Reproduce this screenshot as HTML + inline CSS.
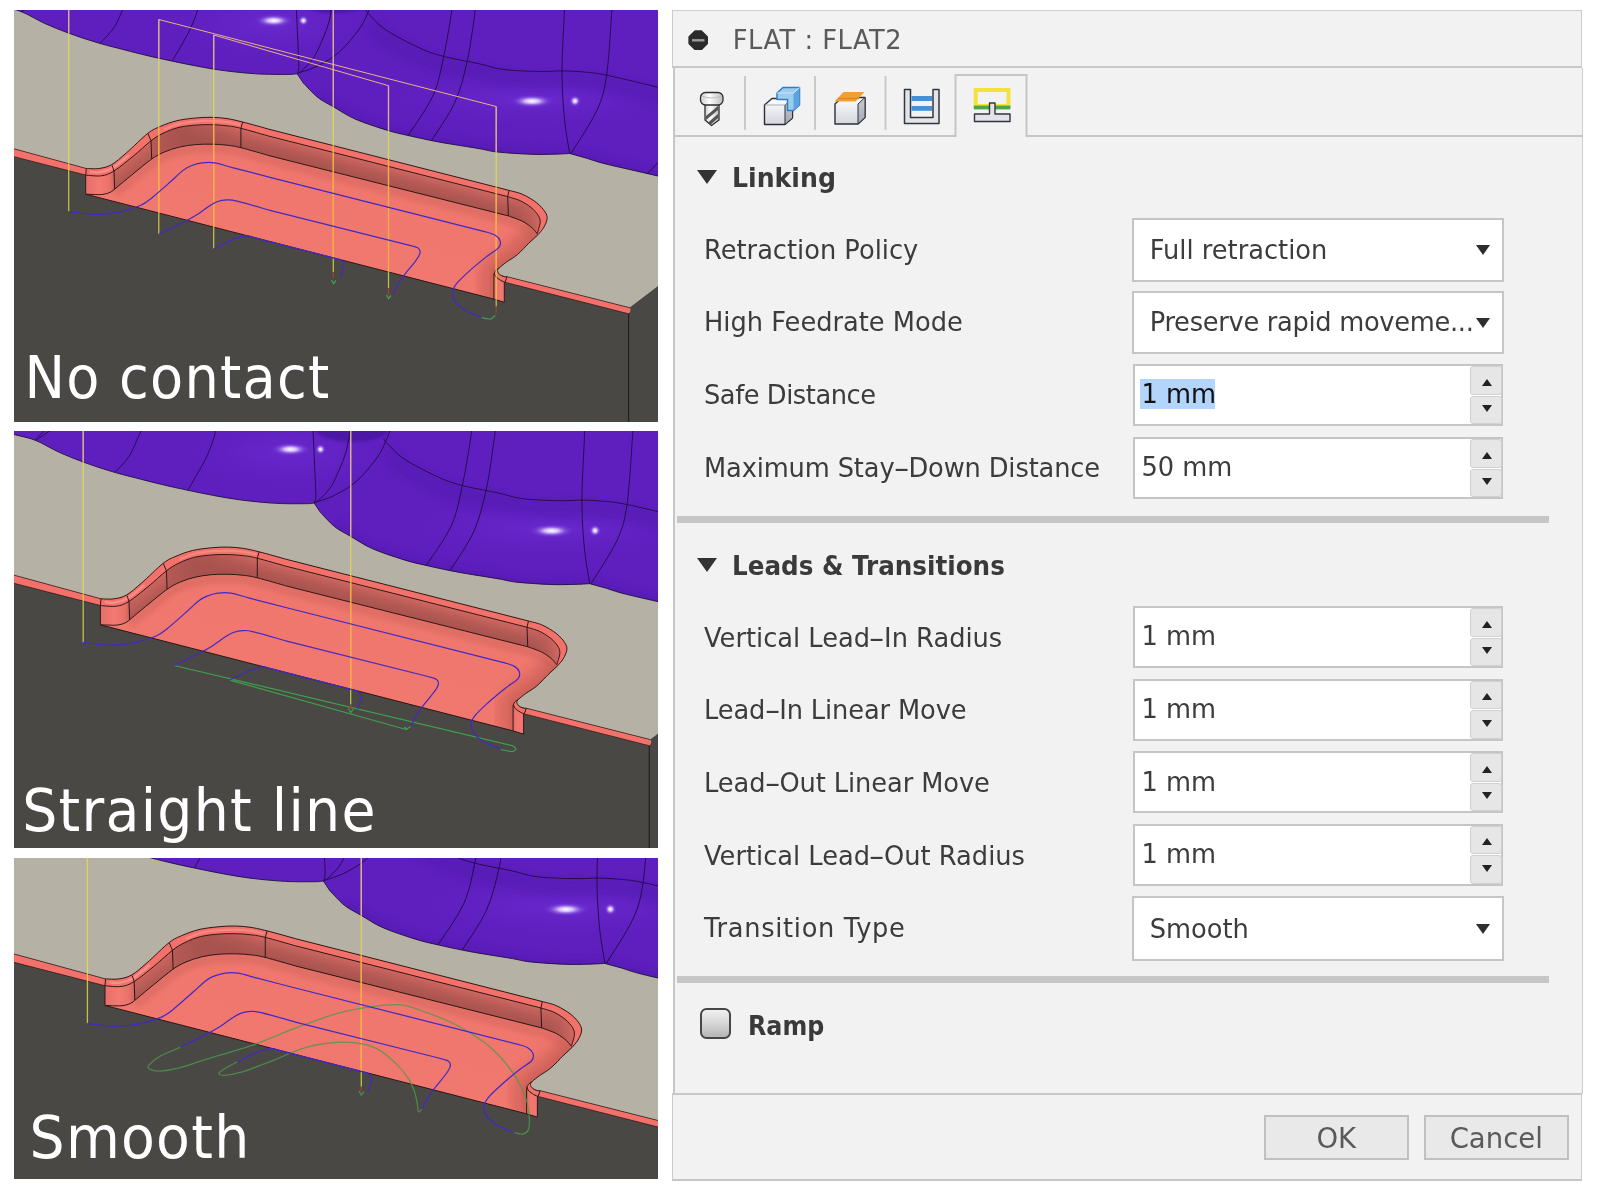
<!DOCTYPE html>
<html><head><meta charset="utf-8"><title>Linking</title>
<style>
html,body{margin:0;padding:0;background:#fff}
body{width:1600px;height:1194px;position:relative;overflow:hidden;font-family:"DejaVu Sans","Liberation Sans",sans-serif;color:#3a3a3a}
.shot{position:absolute;display:block;overflow:hidden}

.dlg{position:absolute;left:0;top:0;will-change:transform}
.abs{position:absolute}
.hy{display:inline-block;transform:scaleX(1.75);margin:0 2.4px}
.lbl{position:absolute;left:704px;height:40px;line-height:40px;font-size:25.7px;white-space:nowrap;color:#3c3c3c}
.hdr{position:absolute;left:732px;transform-origin:0 50%;height:40px;line-height:40px;font-size:25.7px;font-weight:bold;white-space:nowrap;color:#3a3a3a}
.sel{position:absolute;left:1132px;width:372px;height:63.5px;background:#fff;border:2px solid #c5c5c5;box-sizing:border-box}
.sel span{position:absolute;left:15.7px;top:9.8px;height:40px;line-height:40px;font-size:25.7px;white-space:nowrap;color:#3c3c3c}
.sel i{position:absolute;right:12px;top:25px;width:0;height:0;border-left:7px solid transparent;border-right:7px solid transparent;border-top:10px solid #2e2e2e}
.spin{position:absolute;left:1133px;width:370px;height:62px;background:#fff;border:2px solid #c5c5c5;box-sizing:border-box}
.spin span{position:absolute;left:6.5px;top:8.3px;height:40px;line-height:40px;font-size:25.7px;white-space:nowrap;color:#3c3c3c}
.spin b{position:absolute;right:-1px;width:32px;background:#e6e6e6;border:1px solid #d0d0d0;border-radius:3px;box-sizing:border-box}
.spin b.u{top:0;height:28.5px}
.spin b.d{bottom:0;height:28.5px}
.spin b.u:after{content:"";position:absolute;left:10.5px;top:11.5px;border-left:5px solid transparent;border-right:5px solid transparent;border-bottom:7px solid #222}
.spin b.d:after{content:"";position:absolute;left:10.5px;top:8.5px;border-left:5px solid transparent;border-right:5px solid transparent;border-top:7px solid #222}
.bar{position:absolute;left:677px;width:872px;height:7px;background:#c6c6c6}
.tri{position:absolute;width:0;height:0;border-left:10.7px solid transparent;border-right:10.7px solid transparent;border-top:14.5px solid #333}
.btn{position:absolute;top:1114.6px;height:45px;width:144.5px;box-sizing:border-box;border:2px solid #c0c0c0;background:#e9e9e9;font-size:27.5px;line-height:43px;text-align:center;color:#5a5a5a}

</style></head><body>
<svg width="0" height="0" style="position:absolute"><defs>
<clipPath id="cpPurple"><path d="M-40 -12 C-35.6 -10.7 -21.5 -6.4 -13.6 -4.1 C-5.7 -1.8 -0.2 -1.3 7.2 1.6 C14.6 4.5 23.1 10 31 13.6 C38.9 17.2 46.4 20.1 54.8 23.2 C63.2 26.3 73.2 29.6 81.2 32 C89.2 34.5 92.1 35.2 102.8 37.9 C113.5 40.6 129.5 44.9 145.5 48.4 C161.5 51.9 183 56.4 199 59 C215 61.6 229.2 62.9 241.6 63.8 C254 64.7 266.8 64.4 273.7 64.4 C280.6 64.4 281.6 63.9 283.2 63.8 L289.4 73.1 C291.8 75.4 298.6 83.3 303.5 87.2 C308.4 91.1 312.9 93 319.1 96.6 C325.4 100.2 332.1 105.1 341 109 C349.9 112.9 363.4 117.2 372.2 120 C381.1 122.8 386.3 123.7 394.1 125.5 C401.9 127.3 411.5 129.4 419.1 130.9 C426.8 132.4 432.2 133.3 440 134.6 C447.8 135.9 458.8 137.5 466 138.8 C473.2 140 474.9 141.1 483.3 142 C491.7 142.9 507.1 143.9 516.5 144.3 C526 144.7 533.5 144.3 540 144.2 C546.5 144.1 553.1 143.6 555.7 143.5 L572 148 C575.3 149 579.9 151 591.9 154 C603.9 157 622.5 161 643.9 166 C665.2 171 707.3 181 720 184 L720 -40 L-40 -40Z"/></clipPath>
<clipPath id="cpPocket"><path d="M72.3 158.5 C74.4 158.5 80.7 159.1 84.9 158.5 C89.1 157.9 92.9 157.3 97.5 154.7 C102.1 152.1 106.4 148 112.5 142.8 C118.6 137.6 128.2 127.7 133.9 123.3 C139.6 118.9 141.7 118.5 146.5 116.4 C151.3 114.3 157 112.1 162.8 110.7 C168.7 109.3 175.7 108.6 181.6 108 C187.5 107.4 192.8 107.2 198 107.3 C203.2 107.4 207.9 107.8 213 108.6 C218.1 109.4 221.5 110.2 228.7 112 C235.9 113.8 251.4 118.2 256 119.5 L495.1 180.4 C497.4 181.1 504.3 182.4 508.9 184.5 C513.5 186.6 519 189.9 522.7 192.8 C526.4 195.7 529.3 199.2 531 201.8 C532.7 204.5 533.3 206 533.1 208.7 C532.9 211.3 531.1 215 529.6 217.7 C528.1 220.3 525 223.4 524.1 224.6 L514.4 233.6 C512.6 235.4 507.1 241.5 503.4 244.6 C499.7 247.7 495.3 250 492.3 252.2 C489.3 254.4 487.2 256.4 485.4 257.8 C483.6 259.2 482.4 259.5 481.5 260.6 C480.6 261.7 480.2 263.9 479.9 264.5 L479.9 289.1 L71.7 184.2Z"/></clipPath>
<filter id="blur2" x="-10%" y="-30%" width="120%" height="160%"><feGaussianBlur stdDeviation="2.2"/></filter>
<filter id="blur5" x="-40%" y="-40%" width="180%" height="180%"><feGaussianBlur stdDeviation="5"/></filter>
<linearGradient id="gEndFace" gradientUnits="userSpaceOnUse" x1="480" y1="0" x2="490.5" y2="0"><stop offset="0" stop-color="#e26d66"/><stop offset=".35" stop-color="#f2766f"/><stop offset="1" stop-color="#f2766f"/></linearGradient>
<filter id="blur1" x="-10%" y="-30%" width="120%" height="160%"><feGaussianBlur stdDeviation="1.2"/></filter>
<filter id="blur4" x="-10%" y="-50%" width="120%" height="200%"><feGaussianBlur stdDeviation="4"/></filter>
<linearGradient id="gFloor" gradientUnits="userSpaceOnUse" x1="100" y1="120" x2="60" y2="280"><stop offset="0" stop-color="#f0776d"/><stop offset="1" stop-color="#f2796f"/></linearGradient>
<linearGradient id="gWall" gradientUnits="userSpaceOnUse" x1="0" y1="0" x2="-5.1" y2="20" gradientTransform="translate(300 137)"><stop offset="0" stop-color="#cf6761"/><stop offset=".5" stop-color="#b45954"/><stop offset="1" stop-color="#a6524e"/></linearGradient>
<linearGradient id="gSegA" gradientUnits="userSpaceOnUse" x1="72" y1="0" x2="101" y2="0"><stop offset="0" stop-color="#e56f69"/><stop offset=".45" stop-color="#f47a73"/><stop offset=".8" stop-color="#e9726b"/><stop offset="1" stop-color="#c9625c"/></linearGradient>
<linearGradient id="gSegB" gradientUnits="userSpaceOnUse" x1="110" y1="150" x2="122" y2="166"><stop offset="0" stop-color="#cf6660"/><stop offset="1" stop-color="#a9544f"/></linearGradient>
<linearGradient id="gSegC" gradientUnits="userSpaceOnUse" x1="137" y1="0" x2="227" y2="0"><stop offset="0" stop-color="#b85b56" stop-opacity=".9"/><stop offset=".35" stop-color="#a9534f" stop-opacity=".5"/><stop offset="1" stop-color="#a9534f" stop-opacity="0"/></linearGradient>
<linearGradient id="gSegE" gradientUnits="userSpaceOnUse" x1="494" y1="0" x2="526" y2="0"><stop offset="0" stop-color="#a9534f" stop-opacity="0"/><stop offset="1" stop-color="#d66a63" stop-opacity=".9"/></linearGradient>
<linearGradient id="gEndWall" gradientUnits="userSpaceOnUse" x1="440" y1="0" x2="482" y2="0"><stop offset="0" stop-color="#f07a72" stop-opacity="0"/><stop offset=".75" stop-color="#d96c65" stop-opacity=".75"/><stop offset="1" stop-color="#c9625c" stop-opacity=".9"/></linearGradient>
<radialGradient id="gHL"><stop offset="0" stop-color="#fff" stop-opacity="1"/><stop offset=".3" stop-color="#e8d8ff" stop-opacity=".85"/><stop offset=".65" stop-color="#9a6cf0" stop-opacity=".35"/><stop offset="1" stop-color="#6a2ad0" stop-opacity="0"/></radialGradient>
<radialGradient id="gPL"><stop offset="0" stop-color="#7030d8" stop-opacity=".55"/><stop offset="1" stop-color="#6524c8" stop-opacity="0"/></radialGradient>
<radialGradient id="gPD"><stop offset="0" stop-color="#3c0e8c" stop-opacity=".7"/><stop offset="1" stop-color="#4a12a4" stop-opacity="0"/></radialGradient>

<g id="model">
<rect x="-40" y="-40" width="760" height="520" fill="#4a4845"/>
<path d="M-40 127.9 L72.3 158.5 L493 266.7 L616 297.8 L646 275 L720 218.7 L720 -40 L-40 -40Z" fill="#b5b1a4"/>
<path d="M614.6 299.2V480" stroke="#1f1d1b" stroke-width="1.05" fill="none"/>
<path d="M616 297.8L646 275L720 218.7" stroke="#3a3936" stroke-width="0.7" fill="none"/>
<path d="M-40 127.9L72.3 158.5L71.7 165.1L-40 136.4Z" fill="#f2726b"/>
<path d="M-40 127.9L72.3 158.5M-40 136.4L71.7 165.1" stroke="#2b1414" stroke-width="0.7" fill="none"/>
<path d="M493 266.7L616 297.8Q617.5 301 614.6 303.8L491 272.3Z" fill="#f2726b"/>
<path d="M493 266.7L616 297.8M491 272.3L614.6 303.8" stroke="#2b1414" stroke-width="0.7" fill="none"/>
<path d="M72.3 158.5 C74.4 158.5 80.7 159.1 84.9 158.5 C89.1 157.9 92.9 157.3 97.5 154.7 C102.1 152.1 106.4 148 112.5 142.8 C118.6 137.6 128.2 127.7 133.9 123.3 C139.6 118.9 141.7 118.5 146.5 116.4 C151.3 114.3 157 112.1 162.8 110.7 C168.7 109.3 175.7 108.6 181.6 108 C187.5 107.4 192.8 107.2 198 107.3 C203.2 107.4 207.9 107.8 213 108.6 C218.1 109.4 221.5 110.2 228.7 112 C235.9 113.8 251.4 118.2 256 119.5 L495.1 180.4 C497.4 181.1 504.3 182.4 508.9 184.5 C513.5 186.6 519 189.9 522.7 192.8 C526.4 195.7 529.3 199.2 531 201.8 C532.7 204.5 533.3 206 533.1 208.7 C532.9 211.3 531.1 215 529.6 217.7 C528.1 220.3 525 223.4 524.1 224.6 L514.4 233.6 C512.6 235.4 507.1 241.5 503.4 244.6 C499.7 247.7 495.3 250 492.3 252.2 C489.3 254.4 487.2 256.4 485.4 257.8 C483.6 259.2 482.4 259.5 481.5 260.6 C480.6 261.7 480.2 263.9 479.9 264.5 L479.9 289.1 L71.7 184.2Z" fill="url(#gFloor)"/>
<g clip-path="url(#cpPocket)">
<path d="M526 222 C524.1 223.9 518.2 229.8 514.4 233.6 C510.6 237.4 507.1 241.5 503.4 244.6 C499.7 247.7 495.3 250 492.3 252.2 C489.3 254.4 487.2 256.4 485.4 257.8 C483.6 259.2 482.4 259.5 481.5 260.6 C480.6 261.7 480.2 263.9 479.9 264.5 L479.9 292" stroke="#b9544e" stroke-width="30" fill="none" opacity=".42" filter="url(#blur5)"/>
<path d="M526 222 C524.1 223.9 518.2 229.8 514.4 233.6 C510.6 237.4 507.1 241.5 503.4 244.6 C499.7 247.7 495.3 250 492.3 252.2 C489.3 254.4 487.2 256.4 485.4 257.8 C483.6 259.2 482.4 259.5 481.5 260.6 C480.6 261.7 480.2 263.9 479.9 264.5 L479.9 292" stroke="#b9544e" stroke-width="9" fill="none" opacity=".3" filter="url(#blur2)"/>
<path d="M100.6 179.2 C103.6 176.7 112.6 169.1 118.8 164.1 C125 159.1 132.5 152.7 137.7 149 C142.9 145.3 145.6 144.1 150.2 142.1 C154.8 140.1 160.1 138.3 165.3 137.1 C170.5 135.8 176.2 135.1 181.6 134.6 C187 134.1 192.8 134.1 198 134.2 C203.2 134.3 208.2 134.6 213 135.2 C217.8 135.8 219.7 135.9 226.9 137.7 C234.1 139.5 251.2 144.5 256 145.9 L494.4 205.9 C496.8 206.8 504.9 209.4 508.9 211.5 C512.9 213.6 516.2 216.3 518.6 218.4 C521 220.5 522.6 223 523.4 223.9" stroke="#c45f59" stroke-width="12" fill="none" opacity=".35" filter="url(#blur2)" transform="translate(0,3)"/>
</g>
<path d="M485.4 257.8 C485.1 258.3 483.6 259.7 483.6 260.8 C483.6 261.9 484.4 263.2 485.4 264.2 C486.4 265.1 488.3 266.1 489.6 266.5 C490.9 266.9 492.4 266.7 493 266.7 L491 272.3 L491 272.3 C490.3 272 488.3 271.3 486.8 270.4 C485.3 269.5 483.1 268.1 482 266.9 C480.9 265.7 480.5 263.6 480.2 263 L479.9 264.5 L481.5 260.6Z" fill="#f2726b"/>
<path d="M480.2 263 C480.5 263.6 480.9 265.7 482 266.9 C483.1 268.1 485.3 269.5 486.8 270.4 C488.3 271.3 490.3 272 491 272.3 L490.3 272.3 L490.3 292.3 L479.9 289.1 L479.9 263Z" fill="url(#gEndFace)"/>
<path d="M71.7 165.1 C74.3 165.2 82.7 166.5 87.4 165.8 C92.1 165.1 94.8 164.2 100 161 C105.2 157.8 112.6 151.5 118.8 146.5 C125 141.5 132 134.7 137 130.8 C142 126.9 144.5 125.5 149 123.3 C153.5 121.1 158.6 119 164 117.6 C169.4 116.2 175.9 115.6 181.6 115.1 C187.3 114.6 192.8 114.6 198 114.7 C203.2 114.8 208.2 115.2 213 115.8 C217.8 116.4 219.7 116.5 226.9 118.3 C234.1 120.1 251.2 125.1 256 126.4 L493.7 186.6 C495.8 187.3 502.3 188.9 506.2 190.7 C510.1 192.5 514.2 195.2 517.2 197.6 C520.2 200 522.6 202.9 524.1 205.2 C525.6 207.5 526.1 209.3 526.2 211.5 C526.3 213.7 525.3 216.5 524.8 218.4 C524.3 220.3 523.6 222.4 523.4 223.2 L523.4 223.9 C522.6 223 521 220.5 518.6 218.4 C516.2 216.3 512.9 213.6 508.9 211.5 C504.9 209.4 496.8 206.8 494.4 205.9 L256 145.9 C251.2 144.5 234.1 139.5 226.9 137.7 C219.7 135.9 217.8 135.8 213 135.2 C208.2 134.6 203.2 134.3 198 134.2 C192.8 134.1 187 134.1 181.6 134.6 C176.2 135.1 170.5 135.8 165.3 137.1 C160.1 138.3 154.8 140.1 150.2 142.1 C145.6 144.1 142.9 145.3 137.7 149 C132.5 152.7 125 159.1 118.8 164.1 C112.6 169.1 104.4 176.2 100.6 179.2 C96.8 182.2 98.4 181.4 96.2 182.3 C94 183.2 91.5 184.2 87.4 184.5 C83.3 184.8 74.3 184.2 71.7 184.2Z" fill="url(#gWall)"/>
<path d="M71.7 165.1 C74.3 165.2 82.7 166.5 87.4 165.8 C92.1 165.1 97.9 161.8 100 161 L100.6 179.2 C99.9 179.7 98.4 181.4 96.2 182.3 C94 183.2 91.5 184.2 87.4 184.5 C83.3 184.8 74.3 184.2 71.7 184.2Z" fill="url(#gSegA)"/>
<path d="M100 161 C103.1 158.6 112.6 151.5 118.8 146.5 C125 141.5 134 133.4 137 130.8 L137.7 149 C134.5 151.5 125 159.1 118.8 164.1 C112.6 169.1 103.6 176.7 100.6 179.2Z" fill="url(#gSegB)"/>
<path d="M137 130.8 C139 129.6 144.5 125.5 149 123.3 C153.5 121.1 158.6 119 164 117.6 C169.4 116.2 175.9 115.6 181.6 115.1 C187.3 114.6 192.8 114.6 198 114.7 C203.2 114.8 208.2 115.2 213 115.8 C217.8 116.4 224.6 117.9 226.9 118.3 L226.9 137.7 C224.6 137.3 217.8 135.8 213 135.2 C208.2 134.6 203.2 134.3 198 134.2 C192.8 134.1 187 134.1 181.6 134.6 C176.2 135.1 170.5 135.8 165.3 137.1 C160.1 138.3 154.8 140.1 150.2 142.1 C145.6 144.1 139.8 147.8 137.7 149Z" fill="url(#gSegC)"/>
<path d="M493.7 186.6 C495.8 187.3 502.3 188.9 506.2 190.7 C510.1 192.5 514.2 195.2 517.2 197.6 C520.2 200 522.6 202.9 524.1 205.2 C525.6 207.5 526.1 209.3 526.2 211.5 C526.3 213.7 525.3 216.5 524.8 218.4 C524.3 220.3 523.6 222.4 523.4 223.2 L523.4 223.9 C522.6 223 521 220.5 518.6 218.4 C516.2 216.3 512.9 213.6 508.9 211.5 C504.9 209.4 496.8 206.8 494.4 205.9Z" fill="url(#gSegE)"/>
<path d="M72.3 158.5 C74.4 158.5 80.7 159.1 84.9 158.5 C89.1 157.9 92.9 157.3 97.5 154.7 C102.1 152.1 106.4 148 112.5 142.8 C118.6 137.6 128.2 127.7 133.9 123.3 C139.6 118.9 141.7 118.5 146.5 116.4 C151.3 114.3 157 112.1 162.8 110.7 C168.7 109.3 175.7 108.6 181.6 108 C187.5 107.4 192.8 107.2 198 107.3 C203.2 107.4 207.9 107.8 213 108.6 C218.1 109.4 221.5 110.2 228.7 112 C235.9 113.8 251.4 118.2 256 119.5 L495.1 180.4 C497.4 181.1 504.3 182.4 508.9 184.5 C513.5 186.6 519 189.9 522.7 192.8 C526.4 195.7 529.3 199.2 531 201.8 C532.7 204.5 533.3 206 533.1 208.7 C532.9 211.3 531.1 215 529.6 217.7 C528.1 220.3 525 223.4 524.1 224.6 L523.4 223.2 C523.6 222.4 524.3 220.3 524.8 218.4 C525.3 216.5 526.3 213.7 526.2 211.5 C526.1 209.3 525.6 207.5 524.1 205.2 C522.6 202.9 520.2 200 517.2 197.6 C514.2 195.2 510.1 192.5 506.2 190.7 C502.3 188.9 495.8 187.3 493.7 186.6 L256 126.4 C251.2 125.1 234.1 120.1 226.9 118.3 C219.7 116.5 217.8 116.4 213 115.8 C208.2 115.2 203.2 114.8 198 114.7 C192.8 114.6 187.3 114.6 181.6 115.1 C175.9 115.6 169.4 116.2 164 117.6 C158.6 119 153.5 121.1 149 123.3 C144.5 125.5 142 126.9 137 130.8 C132 134.7 125 141.5 118.8 146.5 C112.6 151.5 105.2 157.8 100 161 C94.8 164.2 92.1 165.1 87.4 165.8 C82.7 166.5 74.3 165.2 71.7 165.1Z" fill="#f2726b"/>
<path d="M76 161.8 C77.7 161.9 82.2 162.8 86 162.2 C89.8 161.6 93.7 160.9 98.5 158 C103.3 155.1 112.2 147.2 115 145" stroke="#ffa79f" stroke-width="2.2" fill="none" opacity=".55"/>
<path d="M150 119.6 C152.3 118.7 158.7 115.4 164 114 C169.3 112.6 175.9 111.9 181.6 111.4 C187.3 110.9 192.8 110.8 198 110.9 C203.2 111 208.3 111.4 213 112 C217.7 112.6 223.8 114.2 226 114.6" stroke="#ffa79f" stroke-width="2" fill="none" opacity=".45"/>
<path d="M72.3 158.5 C74.4 158.5 80.7 159.1 84.9 158.5 C89.1 157.9 92.9 157.3 97.5 154.7 C102.1 152.1 106.4 148 112.5 142.8 C118.6 137.6 128.2 127.7 133.9 123.3 C139.6 118.9 141.7 118.5 146.5 116.4 C151.3 114.3 157 112.1 162.8 110.7 C168.7 109.3 175.7 108.6 181.6 108 C187.5 107.4 192.8 107.2 198 107.3 C203.2 107.4 207.9 107.8 213 108.6 C218.1 109.4 221.5 110.2 228.7 112 C235.9 113.8 251.4 118.2 256 119.5 L495.1 180.4 C497.4 181.1 504.3 182.4 508.9 184.5 C513.5 186.6 519 189.9 522.7 192.8 C526.4 195.7 529.3 199.2 531 201.8 C532.7 204.5 533.3 206 533.1 208.7 C532.9 211.3 531.1 215 529.6 217.7 C528.1 220.3 525 223.4 524.1 224.6 L514.4 233.6 C512.6 235.4 507.1 241.5 503.4 244.6 C499.7 247.7 495.3 250 492.3 252.2 C489.3 254.4 486.8 256.4 485.4 257.8 C483.9 259.2 483.6 259.7 483.6 260.8 C483.6 261.9 484.4 263.2 485.4 264.2 C486.4 265.1 488.3 266.1 489.6 266.5 C490.9 266.9 492.4 266.7 493 266.7 M71.7 165.1 C74.3 165.2 82.7 166.5 87.4 165.8 C92.1 165.1 94.8 164.2 100 161 C105.2 157.8 112.6 151.5 118.8 146.5 C125 141.5 132 134.7 137 130.8 C142 126.9 144.5 125.5 149 123.3 C153.5 121.1 158.6 119 164 117.6 C169.4 116.2 175.9 115.6 181.6 115.1 C187.3 114.6 192.8 114.6 198 114.7 C203.2 114.8 208.2 115.2 213 115.8 C217.8 116.4 219.7 116.5 226.9 118.3 C234.1 120.1 251.2 125.1 256 126.4 L493.7 186.6 C495.8 187.3 502.3 188.9 506.2 190.7 C510.1 192.5 514.2 195.2 517.2 197.6 C520.2 200 522.6 202.9 524.1 205.2 C525.6 207.5 526.1 209.3 526.2 211.5 C526.3 213.7 525.3 216.5 524.8 218.4 C524.3 220.3 523.6 222.4 523.4 223.2 M100.6 179.2 C103.6 176.7 112.6 169.1 118.8 164.1 C125 159.1 132.5 152.7 137.7 149 C142.9 145.3 145.6 144.1 150.2 142.1 C154.8 140.1 160.1 138.3 165.3 137.1 C170.5 135.8 176.2 135.1 181.6 134.6 C187 134.1 192.8 134.1 198 134.2 C203.2 134.3 208.2 134.6 213 135.2 C217.8 135.8 219.7 135.9 226.9 137.7 C234.1 139.5 251.2 144.5 256 145.9 L494.4 205.9 C496.8 206.8 504.9 209.4 508.9 211.5 C512.9 213.6 516.2 216.3 518.6 218.4 C521 220.5 522.6 223 523.4 223.9 M71.7 184.2 C74.3 184.2 83.3 184.8 87.4 184.5 C91.5 184.2 94 183.2 96.2 182.3 C98.4 181.4 99.9 179.7 100.6 179.2 M72.3 158.5L71.7 165.1L71.7 184.2L479.9 289.1 M98.1 155.3L100 161L100.6 179.2 M133.9 123.3L137 130.8L137.7 149 M228.7 112L226.9 118.3L226.9 137.7 M495.1 180.4L493.7 186.6L494.4 205.9 M485.4 257.8 C484.8 258.3 482.4 259.5 481.5 260.6 C480.6 261.7 480.2 263.9 479.9 264.5 L479.9 289.1L490.3 292.3L490.3 272.3 M480.2 263 C480.5 263.6 480.9 265.7 482 266.9 C483.1 268.1 485.3 269.5 486.8 270.4 C488.3 271.3 490.3 272 491 272.3 M493 266.7L491 272.3" stroke="#2b1414" stroke-width="0.95" fill="none" stroke-linejoin="round"/>
<path d="M-40 -12 C-35.6 -10.7 -21.5 -6.4 -13.6 -4.1 C-5.7 -1.8 -0.2 -1.3 7.2 1.6 C14.6 4.5 23.1 10 31 13.6 C38.9 17.2 46.4 20.1 54.8 23.2 C63.2 26.3 73.2 29.6 81.2 32 C89.2 34.5 92.1 35.2 102.8 37.9 C113.5 40.6 129.5 44.9 145.5 48.4 C161.5 51.9 183 56.4 199 59 C215 61.6 229.2 62.9 241.6 63.8 C254 64.7 266.8 64.4 273.7 64.4 C280.6 64.4 281.6 63.9 283.2 63.8 L289.4 73.1 C291.8 75.4 298.6 83.3 303.5 87.2 C308.4 91.1 312.9 93 319.1 96.6 C325.4 100.2 332.1 105.1 341 109 C349.9 112.9 363.4 117.2 372.2 120 C381.1 122.8 386.3 123.7 394.1 125.5 C401.9 127.3 411.5 129.4 419.1 130.9 C426.8 132.4 432.2 133.3 440 134.6 C447.8 135.9 458.8 137.5 466 138.8 C473.2 140 474.9 141.1 483.3 142 C491.7 142.9 507.1 143.9 516.5 144.3 C526 144.7 533.5 144.3 540 144.2 C546.5 144.1 553.1 143.6 555.7 143.5 L572 148 C575.3 149 579.9 151 591.9 154 C603.9 157 622.5 161 643.9 166 C665.2 171 707.3 181 720 184 L720 -40 L-40 -40Z" fill="#5f1fbf"/>
<g clip-path="url(#cpPurple)">
<ellipse cx="520" cy="88" rx="150" ry="30" fill="url(#gPL)"/>
<ellipse cx="260" cy="14" rx="110" ry="36" fill="url(#gPL)"/>
<ellipse cx="320.6" cy="-10.5" rx="36.6" ry="13.6" fill="#4815a0" opacity=".85" filter="url(#blur1)"/>
<path d="M355 4.4 C357.8 7 363.9 14.6 372 20 C380.1 25.4 394.2 32.7 403.5 37 C412.8 41.3 417.6 43.2 428 46 C438.4 48.8 456.3 51.8 466 54 C475.7 56.2 479 57.8 486.3 59 C493.6 60.2 502.4 60.6 510 61 C517.5 61.4 525 61.4 531.6 61.4 C538.2 61.4 543.2 60.8 549.6 60.9 C556 61 563 61.3 570 62 C577 62.7 579.6 62.6 591.9 65.1 C604.2 67.6 622.5 72 643.9 77.2 C665.2 82.4 707.3 92.9 720 96" stroke="#4c14a6" stroke-width="14" fill="none" opacity=".35" transform="translate(0,9)" filter="url(#blur4)"/>
<path d="M303.5 87.2 C306.1 88.8 312.9 93 319.1 96.6 C325.4 100.2 332.1 105.1 341 109 C349.9 112.9 363.4 117.2 372.2 120 C381.1 122.8 386.3 123.7 394.1 125.5 C401.9 127.3 411.5 129.4 419.1 130.9 C426.8 132.4 432.2 133.3 440 134.6 C447.8 135.9 458.8 137.5 466 138.8 C473.2 140 474.9 141.1 483.3 142 C491.7 142.9 507.1 143.9 516.5 144.3 C526 144.7 533.5 144.3 540 144.2 C546.5 144.1 553.1 143.6 555.7 143.5 L572 148 C575.3 149 579.9 151 591.9 154 C603.9 157 622.5 161 643.9 166 C665.2 171 707.3 181 720 184" stroke="#4a139f" stroke-width="10" fill="none" opacity=".35" filter="url(#blur4)"/>
</g>
<path d="M-40 -12 C-35.6 -10.7 -21.5 -6.4 -13.6 -4.1 C-5.7 -1.8 -0.2 -1.3 7.2 1.6 C14.6 4.5 23.1 10 31 13.6 C38.9 17.2 46.4 20.1 54.8 23.2 C63.2 26.3 73.2 29.6 81.2 32 C89.2 34.5 92.1 35.2 102.8 37.9 C113.5 40.6 129.5 44.9 145.5 48.4 C161.5 51.9 183 56.4 199 59 C215 61.6 229.2 62.9 241.6 63.8 C254 64.7 266.8 64.4 273.7 64.4 C280.6 64.4 281.6 63.9 283.2 63.8 L289.4 73.1 C291.8 75.4 298.6 83.3 303.5 87.2 C308.4 91.1 312.9 93 319.1 96.6 C325.4 100.2 332.1 105.1 341 109 C349.9 112.9 363.4 117.2 372.2 120 C381.1 122.8 386.3 123.7 394.1 125.5 C401.9 127.3 411.5 129.4 419.1 130.9 C426.8 132.4 432.2 133.3 440 134.6 C447.8 135.9 458.8 137.5 466 138.8 C473.2 140 474.9 141.1 483.3 142 C491.7 142.9 507.1 143.9 516.5 144.3 C526 144.7 533.5 144.3 540 144.2 C546.5 144.1 553.1 143.6 555.7 143.5 L572 148 C575.3 149 579.9 151 591.9 154 C603.9 157 622.5 161 643.9 166 C665.2 171 707.3 181 720 184 M113.5 -12 C113.2 -11.2 112.7 -9.5 111.9 -7.5 C111.1 -5.5 110.2 -3.8 108.5 0 C106.8 3.8 103.9 11 101.5 15.2 C99.1 19.4 96.6 22 94 25 C91.4 28 87.2 32 85.8 33.4 M186 -14 C185.9 -13 185.9 -10.5 185.4 -7.8 C184.9 -5.1 184.7 -2.7 183 2 C181.3 6.7 179.6 12.5 175.5 20.6 C171.4 28.7 161.2 45.8 158.4 50.8 M282 -14 C282.1 -11.7 282 -9 282.4 0 C282.8 9 283.8 30.4 284.2 40 C284.6 49.6 284.9 53.5 284.8 57.5 C284.6 61.5 283.5 62.7 283.2 63.8 M320 -14 C319.6 -11.7 318.7 -5.4 317.5 0 C316.3 5.4 315.8 10.6 312.9 18.4 C310 26.1 304.6 39.5 300.4 46.5 C296.2 53.5 290.8 57.7 287.9 60.6 C285 63.5 284 63.2 283.2 63.8 M360 -14 C359.2 -11.7 357.4 -5.4 355 0 C352.6 5.4 350.6 11.4 345.7 18.4 C340.8 25.4 332.4 35.6 325.4 41.9 C318.4 48.2 310.3 52.5 303.5 56 C296.7 59.5 287.9 61.7 284.8 62.8 M352 0 C352.5 0.7 351.7 1.1 355 4.4 C358.3 7.7 363.9 14.6 372 20 C380.1 25.4 394.2 32.7 403.5 37 C412.8 41.3 417.6 43.2 428 46 C438.4 48.8 456.3 51.8 466 54 C475.7 56.2 479 57.8 486.3 59 C493.6 60.2 502.4 60.6 510 61 C517.5 61.4 525 61.4 531.6 61.4 C538.2 61.4 543.2 60.8 549.6 60.9 C556 61 563 61.3 570 62 C577 62.7 579.6 62.6 591.9 65.1 C604.2 67.6 622.5 72 643.9 77.2 C665.2 82.4 707.3 92.9 720 96 M439 -14 C438.8 -11.7 439.4 -9.8 437.9 0 C436.4 9.8 433.1 30.7 430 45 C426.9 59.3 425 72.2 419 85.6 C413 99 398.2 118.8 394 125.5 M463 -14 C462.7 -11.7 462.9 -10.6 461.3 0 C459.7 10.6 456.9 34.4 453.5 49.7 C450.1 65 447 78.5 441 91.9 C435 105.4 421.5 124 417.6 130.4 M550.6 -14 C550.6 -11.7 550.8 -12.5 550.4 0 C550 12.5 548 42.9 548 60.9 C548 78.9 549.1 94.2 550.4 108 C551.7 121.8 554.8 137.6 555.7 143.5 M598.5 -14 C598.4 -11.7 598.9 -13.2 597.9 0 C596.9 13.2 595.1 48.2 592.6 65 C590.1 81.8 588.7 87.4 582.8 100.5 C576.9 113.6 561.3 136.3 557 143.5 M668 118 C665.8 121.3 659.1 132.2 655 138 C650.9 143.8 647.2 148.7 643.5 153 C639.8 157.3 634.8 162.2 633 164 M7.2 1.6 C7.8 0.9 9.4 -0.7 11 -2.5 C12.6 -4.3 15.5 -7.2 17 -9 C18.5 -10.8 19.5 -12.3 20 -13 M7.6 1.8 C8.7 1.1 11.4 -0.8 14 -2.5 C16.6 -4.2 20.5 -6.9 23 -8.5 C25.5 -10.1 28 -11.4 29 -12" stroke="#1c0a3c" stroke-width="0.85" fill="none"/>
<ellipse cx="259.75" cy="10.6" rx="20" ry="6.8" fill="url(#gHL)"/>
<circle cx="289.4" cy="10.6" r="5.6" fill="url(#gHL)"/>
<ellipse cx="518" cy="91.2" rx="23" ry="7" fill="url(#gHL)"/>
<circle cx="561" cy="91" r="6.3" fill="url(#gHL)"/>
</g></defs></svg>
<svg class="shot" style="left:14px;top:10px" width="644" height="412" viewBox="0 0 644 412">
<g transform=""><use href="#model"/>
<path d="M144.8 9.5L482.2 96.5M199.7 25L374.5 75.7" stroke="#e6b47c" stroke-width="1" fill="none"/>
<path d="M54.7 -5V201.6 M144.8 9.5V224.3 M199.7 25V238.5 M319.3 -5V262 M374.5 75.7V278 M482.2 96.5V296.5" stroke="#e4de4a" stroke-width="1.25" fill="none" opacity=".8"/><path d="M54.7 -5V201.6 M144.8 9.5V224.3 M199.7 25V238.5 M319.3 -5V262 M374.5 75.7V278 M482.2 96.5V296.5" stroke="#f9a648" stroke-width="1.25" fill="none" opacity=".85" clip-path="url(#cpPocket)"/><path d="M54.7 -5V201.6 M144.8 9.5V224.3 M199.7 25V238.5 M319.3 -5V262 M374.5 75.7V278 M482.2 96.5V296.5" stroke="#e6b0a0" stroke-width="1.25" fill="none" opacity=".7" clip-path="url(#cpPurple)"/>
<path d="M54.7 201.6 C59.1 202.1 72.5 204.3 81.1 204.3 C89.7 204.3 98.8 203.3 106.3 201.8 C113.8 200.3 121.2 197.8 126.4 195.5 C131.6 193.2 132.7 192 137.7 188 C142.7 184 151.3 176.3 156.5 171.7 C161.7 167.1 165.7 163 169 160.4 C172.3 157.8 173.4 157.3 176.6 156 C179.8 154.7 183.9 153.3 187.9 152.8 C191.9 152.3 195.3 152 200.5 152.8 C205.7 153.6 210.1 155.4 219.3 157.8 C228.6 160.2 249.9 165.7 256 167.3 L471.6 221.8 C473.2 222.4 478.9 223.8 481.3 225.3 C483.7 226.8 485.5 228.7 486.1 230.8 C486.7 232.9 487.1 234.9 484.7 237.7 C482.3 240.5 476.8 243.2 471.6 247.4 C466.4 251.6 458.4 258.2 453.6 262.6 C448.8 267 445.1 270.4 442.6 273.6 C440.1 276.8 438.6 278.9 438.4 281.9 C438.2 284.9 439.1 288.6 441.2 291.6 C443.3 294.6 446.5 297.2 450.9 299.9 C455.3 302.5 464.7 306.2 467.5 307.5 M144.6 224.4 C148.7 222.4 162.8 215.6 169 212.5 C175.2 209.4 177.4 208.2 181.6 205.6 C185.8 203 190.6 199.1 194.2 196.8 C197.8 194.5 199.9 193 203 191.8 C206.1 190.7 209.7 190 213 189.9 C216.3 189.8 215.9 189.4 223.1 191.1 C230.3 192.8 250.5 198.8 256 200.3 L395.7 235.3 C397.1 235.8 402.3 236.8 404 238 C405.7 239.2 406.3 240.8 406 242.8 C405.7 244.9 405.2 245.9 402 250.3 C398.8 254.8 390.9 263.8 387 269.5 C383.1 275.2 380 282 378.6 284.5 M199.8 238.9 C203.1 237.3 214 231.6 219.3 229.4 C224.7 227.2 228.5 226.2 231.9 225.9 C235.3 225.6 238.7 227.3 240 227.6 L326 249.6 C326.6 250.2 329 251.6 329.6 253 C330.2 254.4 330 255.6 329.4 258 C328.8 260.4 326.6 265.8 326 267.4" stroke="#4328c6" stroke-width="1.2" fill="none"/>
<path d="M467.5 307.5Q474 309.5 477.5 308.8L481.3 305.5" stroke="#3f9f4c" stroke-width="1.2" fill="none"/>
<path d="M482.2 296.5V303M374.5 278V285M319.3 262V268" stroke="#9a4030" stroke-width="1.4" fill="none"/>
<path d="M372.5 285l2 3.5l2.5-3M317.5 270l2 3.5l2.5-3" stroke="#3f9f4c" stroke-width="1.3" fill="none"/>
</g>
<text x="10.5" y="387.5" font-size="58.5" letter-spacing="1.2" textLength="306" lengthAdjust="spacingAndGlyphs" fill="#fff" font-family='"DejaVu Sans Condensed","DejaVu Sans","Liberation Sans",sans-serif'>No contact</text>
</svg>
<svg class="shot" style="left:14px;top:431px" width="644" height="416.5" viewBox="0 0 644 416.5">
<g transform="translate(13.9 7.6) scale(1.011)"><use href="#model"/>
<path d="M54.7 -20V201.6 M319.3 -20V263" stroke="#e4de4a" stroke-width="1.25" fill="none" opacity=".8"/><path d="M54.7 -20V201.6 M319.3 -20V263" stroke="#f9a648" stroke-width="1.25" fill="none" opacity=".85" clip-path="url(#cpPocket)"/><path d="M54.7 -20V201.6 M319.3 -20V263" stroke="#e6b0a0" stroke-width="1.25" fill="none" opacity=".7" clip-path="url(#cpPurple)"/>
<path d="M467.5 307.5L478.8 309.7Q483.5 308.5 482.3 306 L479.6 303.8L144.6 224.4M378.6 284.5l-3.8 3l-2.5-2.5M375 288L199.8 238.9M317 267l2.3 4l2.7-3.5" stroke="#3f9f4c" stroke-width="1.15" fill="none" stroke-linejoin="round"/>
<path d="M54.7 201.6 C59.1 202.1 72.5 204.3 81.1 204.3 C89.7 204.3 98.8 203.3 106.3 201.8 C113.8 200.3 121.2 197.8 126.4 195.5 C131.6 193.2 132.7 192 137.7 188 C142.7 184 151.3 176.3 156.5 171.7 C161.7 167.1 165.7 163 169 160.4 C172.3 157.8 173.4 157.3 176.6 156 C179.8 154.7 183.9 153.3 187.9 152.8 C191.9 152.3 195.3 152 200.5 152.8 C205.7 153.6 210.1 155.4 219.3 157.8 C228.6 160.2 249.9 165.7 256 167.3 L471.6 221.8 C473.2 222.4 478.9 223.8 481.3 225.3 C483.7 226.8 485.5 228.7 486.1 230.8 C486.7 232.9 487.1 234.9 484.7 237.7 C482.3 240.5 476.8 243.2 471.6 247.4 C466.4 251.6 458.4 258.2 453.6 262.6 C448.8 267 445.1 270.4 442.6 273.6 C440.1 276.8 438.6 278.9 438.4 281.9 C438.2 284.9 439.1 288.6 441.2 291.6 C443.3 294.6 446.5 297.2 450.9 299.9 C455.3 302.5 464.7 306.2 467.5 307.5 M144.6 224.4 C148.7 222.4 162.8 215.6 169 212.5 C175.2 209.4 177.4 208.2 181.6 205.6 C185.8 203 190.6 199.1 194.2 196.8 C197.8 194.5 199.9 193 203 191.8 C206.1 190.7 209.7 190 213 189.9 C216.3 189.8 215.9 189.4 223.1 191.1 C230.3 192.8 250.5 198.8 256 200.3 L395.7 235.3 C397.1 235.8 402.3 236.8 404 238 C405.7 239.2 406.3 240.8 406 242.8 C405.7 244.9 405.2 245.9 402 250.3 C398.8 254.8 390.9 263.8 387 269.5 C383.1 275.2 380 282 378.6 284.5 M199.8 238.9 C203.1 237.3 214 231.6 219.3 229.4 C224.7 227.2 228.5 226.2 231.9 225.9 C235.3 225.6 238.7 227.3 240 227.6 L326 249.6 C326.6 250.2 329 251.6 329.6 253 C330.2 254.4 330 255.6 329.4 258 C328.8 260.4 326.6 265.8 326 267.4" stroke="#4328c6" stroke-width="1.2" fill="none"/>
<path d="M319.3 263V268" stroke="#9a4030" stroke-width="1.4" fill="none"/>
</g>
<text x="8.2" y="399.5" font-size="58.5" letter-spacing="1.2" textLength="354.5" lengthAdjust="spacingAndGlyphs" fill="#fff" font-family='"DejaVu Sans Condensed","DejaVu Sans","Liberation Sans",sans-serif'>Straight line</text>
</svg>
<svg class="shot" style="left:14px;top:858px" width="644" height="320.6" viewBox="0 0 644 320.6">
<g transform="translate(16.9 -42.8) scale(1.033)"><use href="#model"/>
<path d="M54.7 -20V201.6 M319.8 -20V263" stroke="#e4de4a" stroke-width="1.25" fill="none" opacity=".8"/><path d="M54.7 -20V201.6 M319.8 -20V263" stroke="#f9a648" stroke-width="1.25" fill="none" opacity=".85" clip-path="url(#cpPocket)"/><path d="M54.7 -20V201.6 M319.8 -20V263" stroke="#e6b0a0" stroke-width="1.25" fill="none" opacity=".7" clip-path="url(#cpPurple)"/>
<path d="M144.7 224.6 C141.4 226.1 130.1 230.5 125.1 233.3 C120.1 236.1 116.4 239.4 114.7 241.5 C113 243.6 113 244.7 114.7 245.7 C116.4 246.7 120.3 247.9 125.1 247.7 C129.9 247.5 135.8 246.7 143.7 244.6 C151.6 242.5 160.9 238.9 172.6 235.3 C184.3 231.7 200.2 227.7 214 222.9 C227.8 218.1 241.5 211.6 255.3 206.4 C269.1 201.2 284.6 195.4 296.6 191.9 C308.7 188.4 317.3 187.1 327.6 185.7 C337.9 184.3 349 182.7 358.6 183.7 C368.2 184.7 377.5 189.2 385.4 191.9 C393.3 194.7 399.2 196.9 406.1 200.2 C413 203.5 419.8 207.1 426.7 211.6 C433.6 216.1 441.2 221.4 447.4 227.1 C453.6 232.8 459.5 239.8 464 245.7 C468.5 251.5 471.6 256.7 474.3 262.2 C477.1 267.7 479.1 273.5 480.5 278.7 C481.9 283.9 482.4 288.9 482.6 293.2 C482.8 297.5 482.5 302 481.5 304.6 C480.5 307.2 478.6 308.2 476.4 308.7 C474.2 309.1 469.5 307.5 468.1 307.3 M200.5 238.4 C198.3 239.6 190.2 243.8 187.1 245.7 C184 247.6 181.9 248.8 181.9 249.8 C181.9 250.8 183.5 252.1 187.1 251.9 C190.7 251.7 195.7 251.2 203.6 248.8 C211.5 246.4 224.3 241.4 234.6 237.4 C244.9 233.4 255.3 227.9 265.6 225 C275.9 222.1 287 220.3 296.6 219.8 C306.2 219.3 316.2 220.4 323.4 221.9 C330.6 223.4 334.7 225.8 339.9 229.1 C345.1 232.4 350.3 237.4 354.4 241.5 C358.5 245.6 361.9 249.8 364.7 253.9 C367.4 258 369.3 262.2 370.9 266.3 C372.4 270.4 373.3 275.2 374 278.7 C374.7 282.1 374.3 286 375.1 287 C375.9 288 378 284.9 378.6 284.5 M317.5 267l2.3 4l2.7-3.5" stroke="#4c9a48" stroke-width="1.25" fill="none" opacity=".8"/>
<path d="M54.7 201.6 C59.1 202.1 72.5 204.3 81.1 204.3 C89.7 204.3 98.8 203.3 106.3 201.8 C113.8 200.3 121.2 197.8 126.4 195.5 C131.6 193.2 132.7 192 137.7 188 C142.7 184 151.3 176.3 156.5 171.7 C161.7 167.1 165.7 163 169 160.4 C172.3 157.8 173.4 157.3 176.6 156 C179.8 154.7 183.9 153.3 187.9 152.8 C191.9 152.3 195.3 152 200.5 152.8 C205.7 153.6 210.1 155.4 219.3 157.8 C228.6 160.2 249.9 165.7 256 167.3 L471.6 221.8 C473.2 222.4 478.9 223.8 481.3 225.3 C483.7 226.8 485.5 228.7 486.1 230.8 C486.7 232.9 487.1 234.9 484.7 237.7 C482.3 240.5 476.8 243.2 471.6 247.4 C466.4 251.6 458.4 258.2 453.6 262.6 C448.8 267 445.1 270.4 442.6 273.6 C440.1 276.8 438.6 278.9 438.4 281.9 C438.2 284.9 439.1 288.6 441.2 291.6 C443.3 294.6 446.5 297.2 450.9 299.9 C455.3 302.5 464.7 306.2 467.5 307.5 M144.6 224.4 C148.7 222.4 162.8 215.6 169 212.5 C175.2 209.4 177.4 208.2 181.6 205.6 C185.8 203 190.6 199.1 194.2 196.8 C197.8 194.5 199.9 193 203 191.8 C206.1 190.7 209.7 190 213 189.9 C216.3 189.8 215.9 189.4 223.1 191.1 C230.3 192.8 250.5 198.8 256 200.3 L395.7 235.3 C397.1 235.8 402.3 236.8 404 238 C405.7 239.2 406.3 240.8 406 242.8 C405.7 244.9 405.2 245.9 402 250.3 C398.8 254.8 390.9 263.8 387 269.5 C383.1 275.2 380 282 378.6 284.5 M199.8 238.9 C203.1 237.3 214 231.6 219.3 229.4 C224.7 227.2 228.5 226.2 231.9 225.9 C235.3 225.6 238.7 227.3 240 227.6 L326 249.6 C326.6 250.2 329 251.6 329.6 253 C330.2 254.4 330 255.6 329.4 258 C328.8 260.4 326.6 265.8 326 267.4" stroke="#4328c6" stroke-width="1.2" fill="none"/>
<path d="M319.8 263V268" stroke="#9a4030" stroke-width="1.4" fill="none"/>
</g>
<text x="15.5" y="300" font-size="58.5" letter-spacing="1.2" textLength="221" lengthAdjust="spacingAndGlyphs" fill="#fff" font-family='"DejaVu Sans Condensed","DejaVu Sans","Liberation Sans",sans-serif'>Smooth</text>
</svg>

<div class="dlg">
<div class="abs" style="left:672px;top:10px;width:910px;height:58px;background:#f2f2f2;border:1.5px solid #cccccc;border-bottom:2px solid #c8c8c8;box-sizing:border-box"></div>
<div class="abs" style="left:673px;top:68px;width:910px;height:1026px;background:#f2f2f2;border-left:2px solid #c6c6c6;border-right:1.5px solid #cccccc;box-sizing:border-box"></div>
<div class="abs" style="left:672px;top:1093px;width:910px;height:88px;background:#f2f2f2;border:1.5px solid #cccccc;border-top:2px solid #c8c8c8;border-bottom:2px solid #c6c6c6;box-sizing:border-box"></div>
<svg class="abs" style="left:688px;top:30.3px" width="20.4" height="20.4" viewBox="0 0 22 22"><path d="M7.6 1.6H14.4L20.4 7.6V14.4L14.4 20.4H7.6L1.6 14.4V7.6Z" fill="#2b2b2b" stroke="#2b2b2b" stroke-width="2.4" stroke-linejoin="round"/><rect x="4.3" y="9.8" width="13.4" height="2.6" fill="#9c9c9c"/></svg>
<div class="abs" style="left:732.8px;top:20px;height:40px;line-height:40px;font-size:25.7px;letter-spacing:.5px;color:#5a5a5a;white-space:nowrap">FLAT : FLAT2</div>

<svg class="abs" style="left:672px;top:68px" width="912" height="70" viewBox="672 68 912 70">
<!-- tab frame lines -->
<path d="M673 136H955.5V75H1026.5V136H1583" stroke="#c6c6c6" stroke-width="2" fill="none"/>
<path d="M745 76V130M815 76V130M885.5 76V130" stroke="#cacaca" stroke-width="2" fill="none"/>
<!-- icon 1 tool -->
<defs>
<linearGradient id="i1a" x1="0" x2="1"><stop offset="0" stop-color="#cfcfcf"/><stop offset=".4" stop-color="#fff"/><stop offset="1" stop-color="#bdbdbd"/></linearGradient>
<linearGradient id="i2a" x1="0" y1="0" x2="0" y2="1"><stop offset="0" stop-color="#fdfdfe"/><stop offset="1" stop-color="#d5d7de"/></linearGradient>
<linearGradient id="i2b" x1="0" y1="0" x2="0" y2="1"><stop offset="0" stop-color="#c9ccd4"/><stop offset="1" stop-color="#a4a7b0"/></linearGradient>
</defs>
<path d="M705 104V120L711.5 125.5L719 120V104Z" fill="url(#i1a)" stroke="#2e2e2e" stroke-width="1.3" stroke-linejoin="round"/>
<path d="M706 116L718 106V110L706 120ZM708 122.5L718 114V118L711 124.5Z" fill="#555"/>
<rect x="700.5" y="92.5" width="22.5" height="12.5" rx="5" fill="url(#i1a)" stroke="#2e2e2e" stroke-width="1.3"/>
<path d="M702 96Q711.5 100 721.5 96" stroke="#bbb" stroke-width="1" fill="none"/>
<!-- icon 2 cubes -->
<path d="M764.5 105L772 98.5H792.5V118L785 124.5H764.5Z" fill="url(#i2a)" stroke="#2c3038" stroke-width="1.4" stroke-linejoin="round"/>
<path d="M785 105V124.5L792.5 118V98.5Z" fill="url(#i2b)" stroke="#2c3038" stroke-width="1" stroke-linejoin="round"/>
<path d="M764.5 105H785L792.5 98.5" fill="none" stroke="#9a9da6" stroke-width=".8"/>
<path d="M777 93L783 87.5H799.5V105L793.5 110.5H787.5V99.5H777Z" fill="#9ccdf0" stroke="#2f7fc6" stroke-width="1.5" stroke-linejoin="round"/>
<path d="M793.5 93.5V110.5L799.5 105V87.5Z" fill="#5fa3dc"/>
<path d="M777 93H793.5L799.5 87.5" fill="none" stroke="#cfe6f8" stroke-width="1"/>
<!-- icon 3 cube orange top -->
<path d="M835 104L842 97.5H865V117.5L858 124H835Z" fill="url(#i2a)" stroke="#2c3038" stroke-width="1.4" stroke-linejoin="round"/>
<path d="M858 104V124L865 117.5V97.5Z" fill="url(#i2b)" stroke="#2c3038" stroke-width="1" stroke-linejoin="round"/>
<path d="M834.5 101.5L843.5 92H864.5L855.5 101.5Z" fill="#f0a030"/>
<path d="M838 98.5H859" stroke="#d9861a" stroke-width="1.2"/>
<!-- icon 4 U with blue bars -->
<path d="M904.5 89.5H910.5V117.5H933V89.5H939V123.5H904.5Z" fill="#e2e4ea" stroke="#33363e" stroke-width="1.5" stroke-linejoin="round"/>
<rect x="911.5" y="96" width="20.5" height="5" fill="#4a8fd4"/><rect x="911.5" y="106" width="20.5" height="4.8" fill="#4a8fd4"/>
<!-- icon 5 -->
<rect x="975.7" y="90" width="32.8" height="16" fill="none" stroke="#f2e23c" stroke-width="4"/>
<rect x="973.8" y="105.6" width="36.6" height="3.8" fill="#4aa84a"/>
<path d="M989.5 103H995V114H1010V121.5H974.5V114H989.5Z" fill="#e2e4ea" stroke="#33363e" stroke-width="1.4" stroke-linejoin="round"/>
</svg>

<i class="tri" style="left:696.5px;top:169.5px"></i><div class="hdr" style="top:158.3px;transform:scaleX(.98)">Linking</div>
<div class="lbl" style="top:230px;letter-spacing:0px">Retraction Policy</div><div class="sel" style="top:218px;height:63.5px"><span style="margin-top:0px">Full retraction</span><i style="margin-top:0px"></i></div>
<div class="lbl" style="top:302px;letter-spacing:0px">High Feedrate Mode</div><div class="sel" style="top:290.5px;height:63.5px"><span style="margin-top:0px"><span style='position:static;letter-spacing:-.3px'>Preserve rapid moveme...</span></span><i style="margin-top:0px"></i></div>
<div class="lbl" style="top:375px;letter-spacing:-0.45px">Safe Distance</div><div class="spin" style="top:364px"><u style="position:absolute;left:5.1px;top:12.7px;width:74.7px;height:30px;background:#b3d4fb"></u><span style="color:#111">1 mm</span><b class="u"></b><b class="d"></b></div>
<div class="lbl" style="top:448px;letter-spacing:-0.13px">Maximum Stay<span class='hy'>-</span>Down Distance</div><div class="spin" style="top:437px"><span>50 mm</span><b class="u"></b><b class="d"></b></div>
<div class="bar" style="top:516px"></div>
<i class="tri" style="left:696.5px;top:557.5px"></i><div class="hdr" style="top:546px;transform:scaleX(.959)">Leads &amp; Transitions</div>
<div class="lbl" style="top:617.5px;letter-spacing:0px">Vertical Lead<span class='hy'>-</span>In Radius</div><div class="spin" style="top:606.2px"><span>1 mm</span><b class="u"></b><b class="d"></b></div>
<div class="lbl" style="top:690px;letter-spacing:-0.12px">Lead<span class='hy'>-</span>In Linear Move</div><div class="spin" style="top:678.8px"><span>1 mm</span><b class="u"></b><b class="d"></b></div>
<div class="lbl" style="top:763px;letter-spacing:-0.08px">Lead<span class='hy'>-</span>Out Linear Move</div><div class="spin" style="top:751.3px"><span>1 mm</span><b class="u"></b><b class="d"></b></div>
<div class="lbl" style="top:836px;letter-spacing:0px">Vertical Lead<span class='hy'>-</span>Out Radius</div><div class="spin" style="top:823.8px"><span>1 mm</span><b class="u"></b><b class="d"></b></div>
<div class="lbl" style="top:908px;letter-spacing:0.68px">Transition Type</div><div class="sel" style="top:895.8px;height:64.8px"><span style="margin-top:1.1px">Smooth</span><i style="margin-top:1.1px"></i></div>
<div class="bar" style="top:976px"></div>
<div class="abs" style="left:700.3px;top:1008px;width:31.2px;height:31px;box-sizing:border-box;border:2.2px solid #474747;border-radius:6.5px;background:linear-gradient(#f0f0f0,#dcdcdc 40%,#b6b6b6)"></div>
<div class="hdr" style="left:748px;top:1006px;transform:scaleX(.927)">Ramp</div>
<div class="btn" style="left:1264px">OK</div><div class="btn" style="left:1424px">Cancel</div>
</div>

</body></html>
